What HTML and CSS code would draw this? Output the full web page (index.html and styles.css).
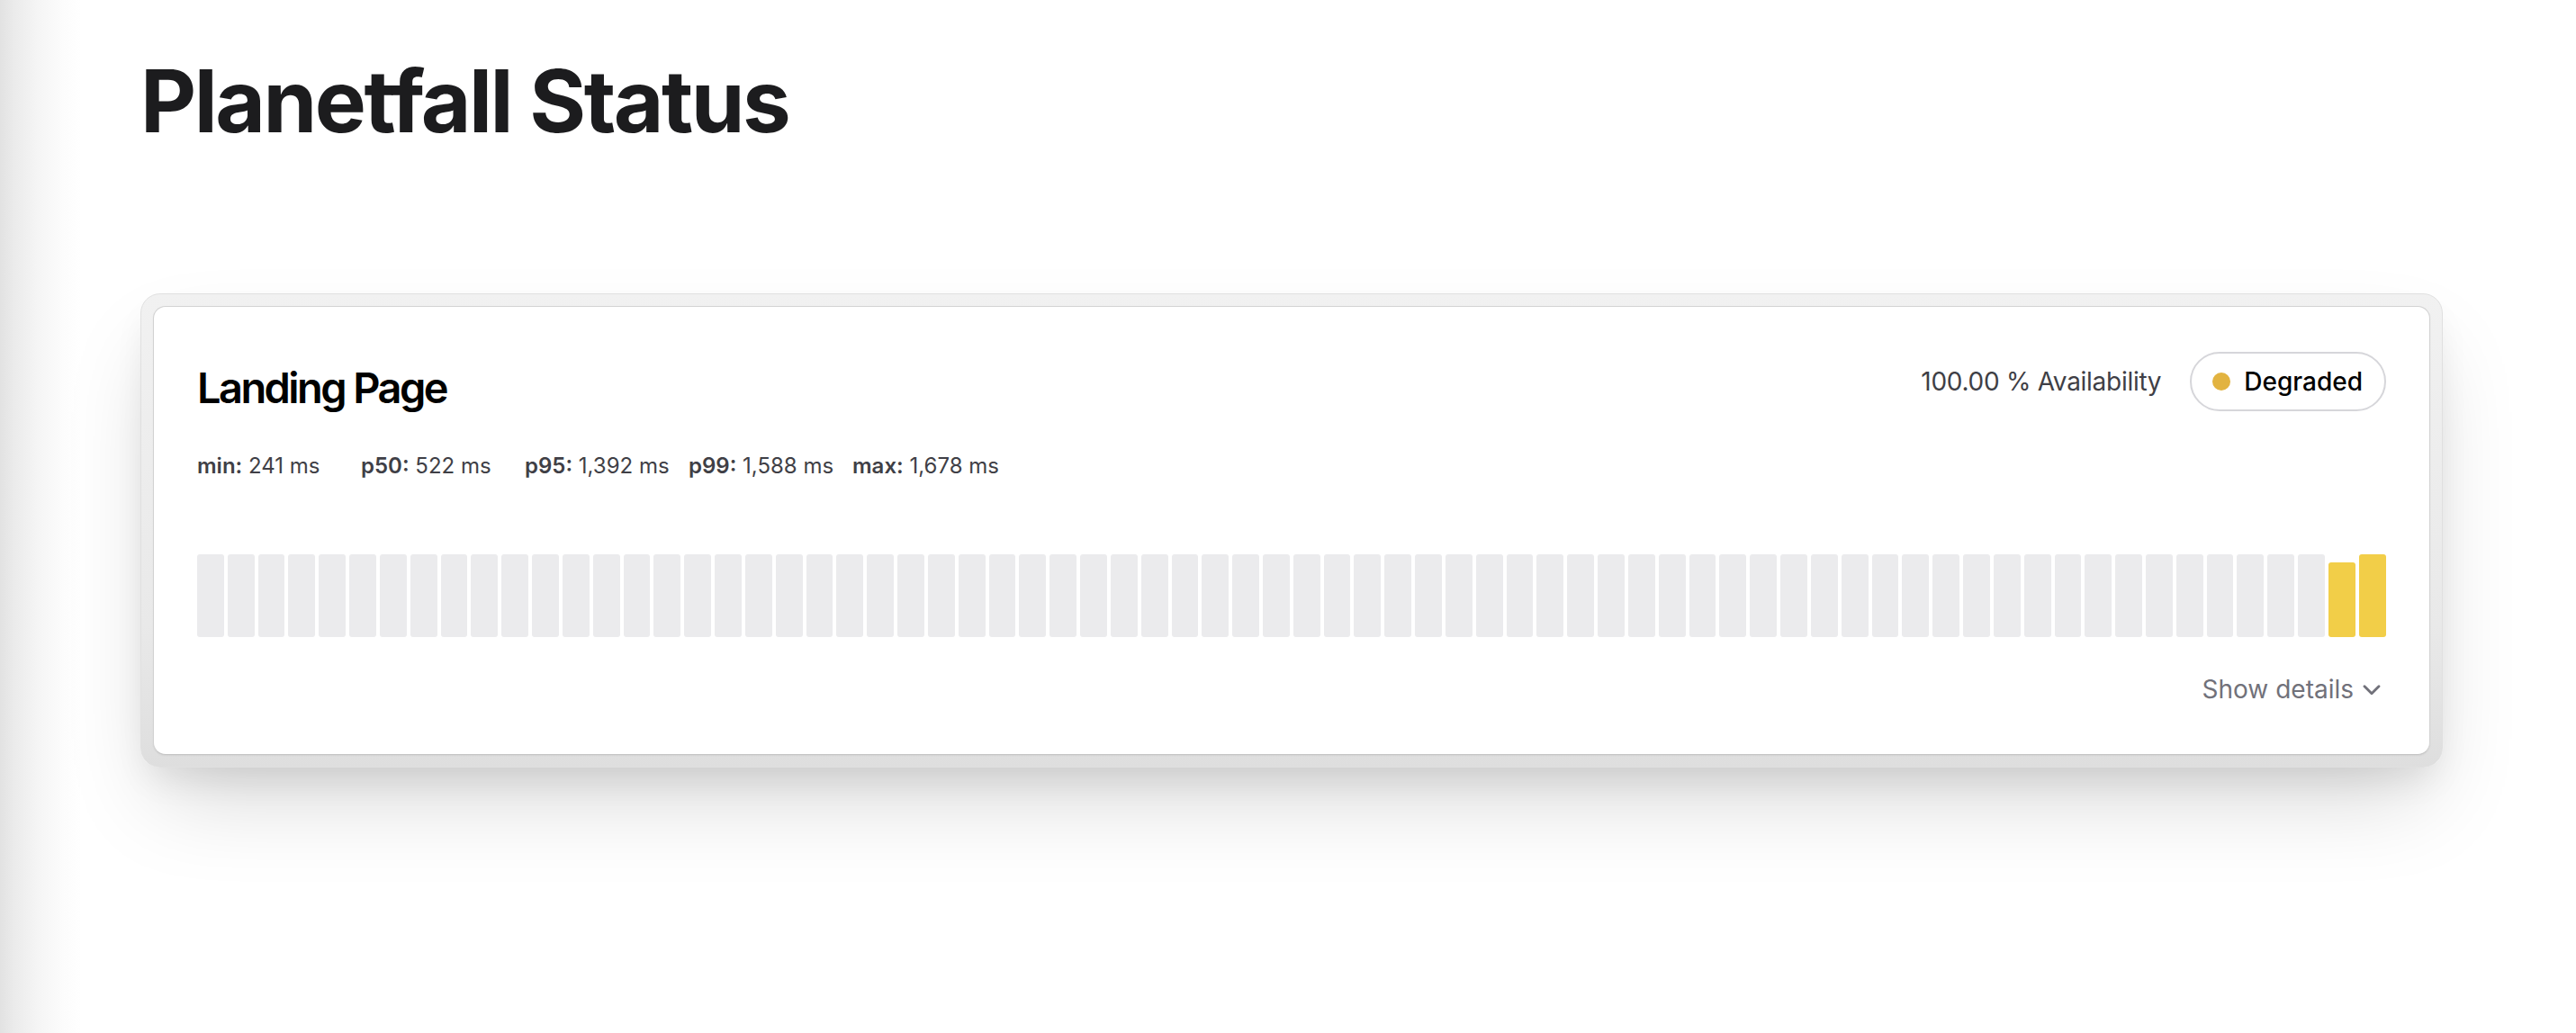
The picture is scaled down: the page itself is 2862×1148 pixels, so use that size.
FILE: index.html
```html
<!DOCTYPE html>
<html lang="en">
<head>
<meta charset="utf-8">
<title>Planetfall Status</title>
<link rel="stylesheet" href="styles.css">
</head>
<body>
<main class="page">
  <h1 class="title">Planetfall Status</h1>
  <section class="frame">
    <div class="card">
      <div class="card-head">
        <h2 class="monitor-name">Landing Page</h2>
        <div class="head-right">
          <span class="availability">100.00 % Availability</span>
          <span class="status-pill"><span class="dot"></span>Degraded</span>
        </div>
      </div>
      <div class="metrics">
        <span class="metric"><b>min:</b> 241 ms</span>
        <span class="metric"><b>p50:</b> 522 ms</span>
        <span class="metric"><b>p95:</b> 1,392 ms</span>
        <span class="metric"><b>p99:</b> 1,588 ms</span>
        <span class="metric"><b>max:</b> 1,678 ms</span>
      </div>
      <div class="bars">
        <div class="bar"></div><div class="bar"></div><div class="bar"></div><div class="bar"></div>
        <div class="bar"></div><div class="bar"></div><div class="bar"></div><div class="bar"></div>
        <div class="bar"></div><div class="bar"></div><div class="bar"></div><div class="bar"></div>
        <div class="bar"></div><div class="bar"></div><div class="bar"></div><div class="bar"></div>
        <div class="bar"></div><div class="bar"></div><div class="bar"></div><div class="bar"></div>
        <div class="bar"></div><div class="bar"></div><div class="bar"></div><div class="bar"></div>
        <div class="bar"></div><div class="bar"></div><div class="bar"></div><div class="bar"></div>
        <div class="bar"></div><div class="bar"></div><div class="bar"></div><div class="bar"></div>
        <div class="bar"></div><div class="bar"></div><div class="bar"></div><div class="bar"></div>
        <div class="bar"></div><div class="bar"></div><div class="bar"></div><div class="bar"></div>
        <div class="bar"></div><div class="bar"></div><div class="bar"></div><div class="bar"></div>
        <div class="bar"></div><div class="bar"></div><div class="bar"></div><div class="bar"></div>
        <div class="bar"></div><div class="bar"></div><div class="bar"></div><div class="bar"></div>
        <div class="bar"></div><div class="bar"></div><div class="bar"></div><div class="bar"></div>
        <div class="bar"></div><div class="bar"></div><div class="bar"></div><div class="bar"></div>
        <div class="bar"></div><div class="bar"></div><div class="bar"></div><div class="bar"></div>
        <div class="bar"></div><div class="bar"></div><div class="bar"></div><div class="bar"></div>
        <div class="bar"></div><div class="bar"></div>
        <div class="bar bar-degraded" style="height: 90%"></div>
        <div class="bar bar-degraded"></div>
      </div>
      <div class="card-foot">
        <button class="details" type="button">Show details
          <svg class="chevron" viewBox="0 0 24 24" width="32" height="32" aria-hidden="true"><path d="M6 9.5 L12 15.5 L18 9.5" fill="none" stroke="currentColor" stroke-width="2.1" stroke-linecap="round" stroke-linejoin="round"/></svg>
        </button>
      </div>
    </div>
  </section>
</main>
</body>
</html>
```

FILE: styles.css
```css
* { box-sizing: border-box; }

html, body {
  margin: 0;
  height: 100%;
}

body {
  font-family: Inter, "Noto Sans", "Liberation Sans", sans-serif;
  background: linear-gradient(90deg, #e2e2e2 0, #ebebeb 16px, #f5f5f5 42px, #fcfcfc 70px, #ffffff 90px);
  color: #18181b;
}

.page {
  padding: 64px 148px 0 156px;
}

.title {
  margin: 0;
  font-size: 96px;
  line-height: 96px;
  font-weight: 700;
  letter-spacing: -0.026em;
  color: #1c1c1e;
}

.frame {
  margin-top: 166px;
  border: 1px solid #e0e0e0;
  border-radius: 22px;
  padding: 13px;
  background: linear-gradient(180deg, #f1f1f1 0%, #e9e9e9 70%, #dedede 100%);
  box-shadow: 0 50px 100px -20px rgba(0, 0, 0, 0.17), 0 20px 40px -10px rgba(0, 0, 0, 0.09);
}

.card {
  background: #ffffff;
  border: 1px solid #d2d2d2;
  border-bottom-color: #c4c4c4;
  border-radius: 14px;
  padding: 50px 48px 52px;
  box-shadow: 0 1px 2px rgba(0, 0, 0, 0.06);
}

.card-head {
  display: flex;
  align-items: center;
  justify-content: space-between;
}

.monitor-name {
  margin: 0;
  padding-top: 13px;
  font-size: 47px;
  line-height: 48px;
  font-weight: 600;
  letter-spacing: -0.055em;
  color: #000000;
}

.head-right {
  display: flex;
  align-items: center;
  gap: 32px;
}

.availability {
  font-size: 28px;
  line-height: 40px;
  letter-spacing: -0.01em;
  color: #3f3f46;
}

.status-pill {
  display: inline-flex;
  align-items: center;
  gap: 15px;
  height: 66px;
  padding: 0 24px 0 23px;
  border: 2px solid #d6d6da;
  border-radius: 999px;
  font-size: 28px;
  line-height: 40px;
  font-weight: 500;
  color: #000000;
}

.dot {
  width: 20px;
  height: 20px;
  border-radius: 50%;
  background: #e2b340;
}

.metrics {
  margin-top: 45px;
  display: grid;
  grid-template-columns: repeat(5, 182px);
  font-size: 24px;
  line-height: 32px;
  color: #3f3f46;
}

.metric b {
  font-weight: 600;
}

.bars {
  margin-top: 82px;
  height: 92px;
  display: flex;
  align-items: flex-end;
  gap: 4px;
}

.bar {
  flex: 1 1 0;
  height: 100%;
  background: #ebebed;
  border-radius: 3px;
}

.bar-degraded {
  background: #f2ce48;
}

.card-foot {
  margin-top: 38px;
  display: flex;
  justify-content: flex-end;
}

.details {
  display: inline-flex;
  align-items: center;
  gap: 4px;
  margin: 0;
  padding: 0;
  border: 0;
  background: none;
  font-family: inherit;
  font-size: 28px;
  line-height: 40px;
  color: #71717a;
  cursor: pointer;
}

.chevron {
  display: block;
}
```
